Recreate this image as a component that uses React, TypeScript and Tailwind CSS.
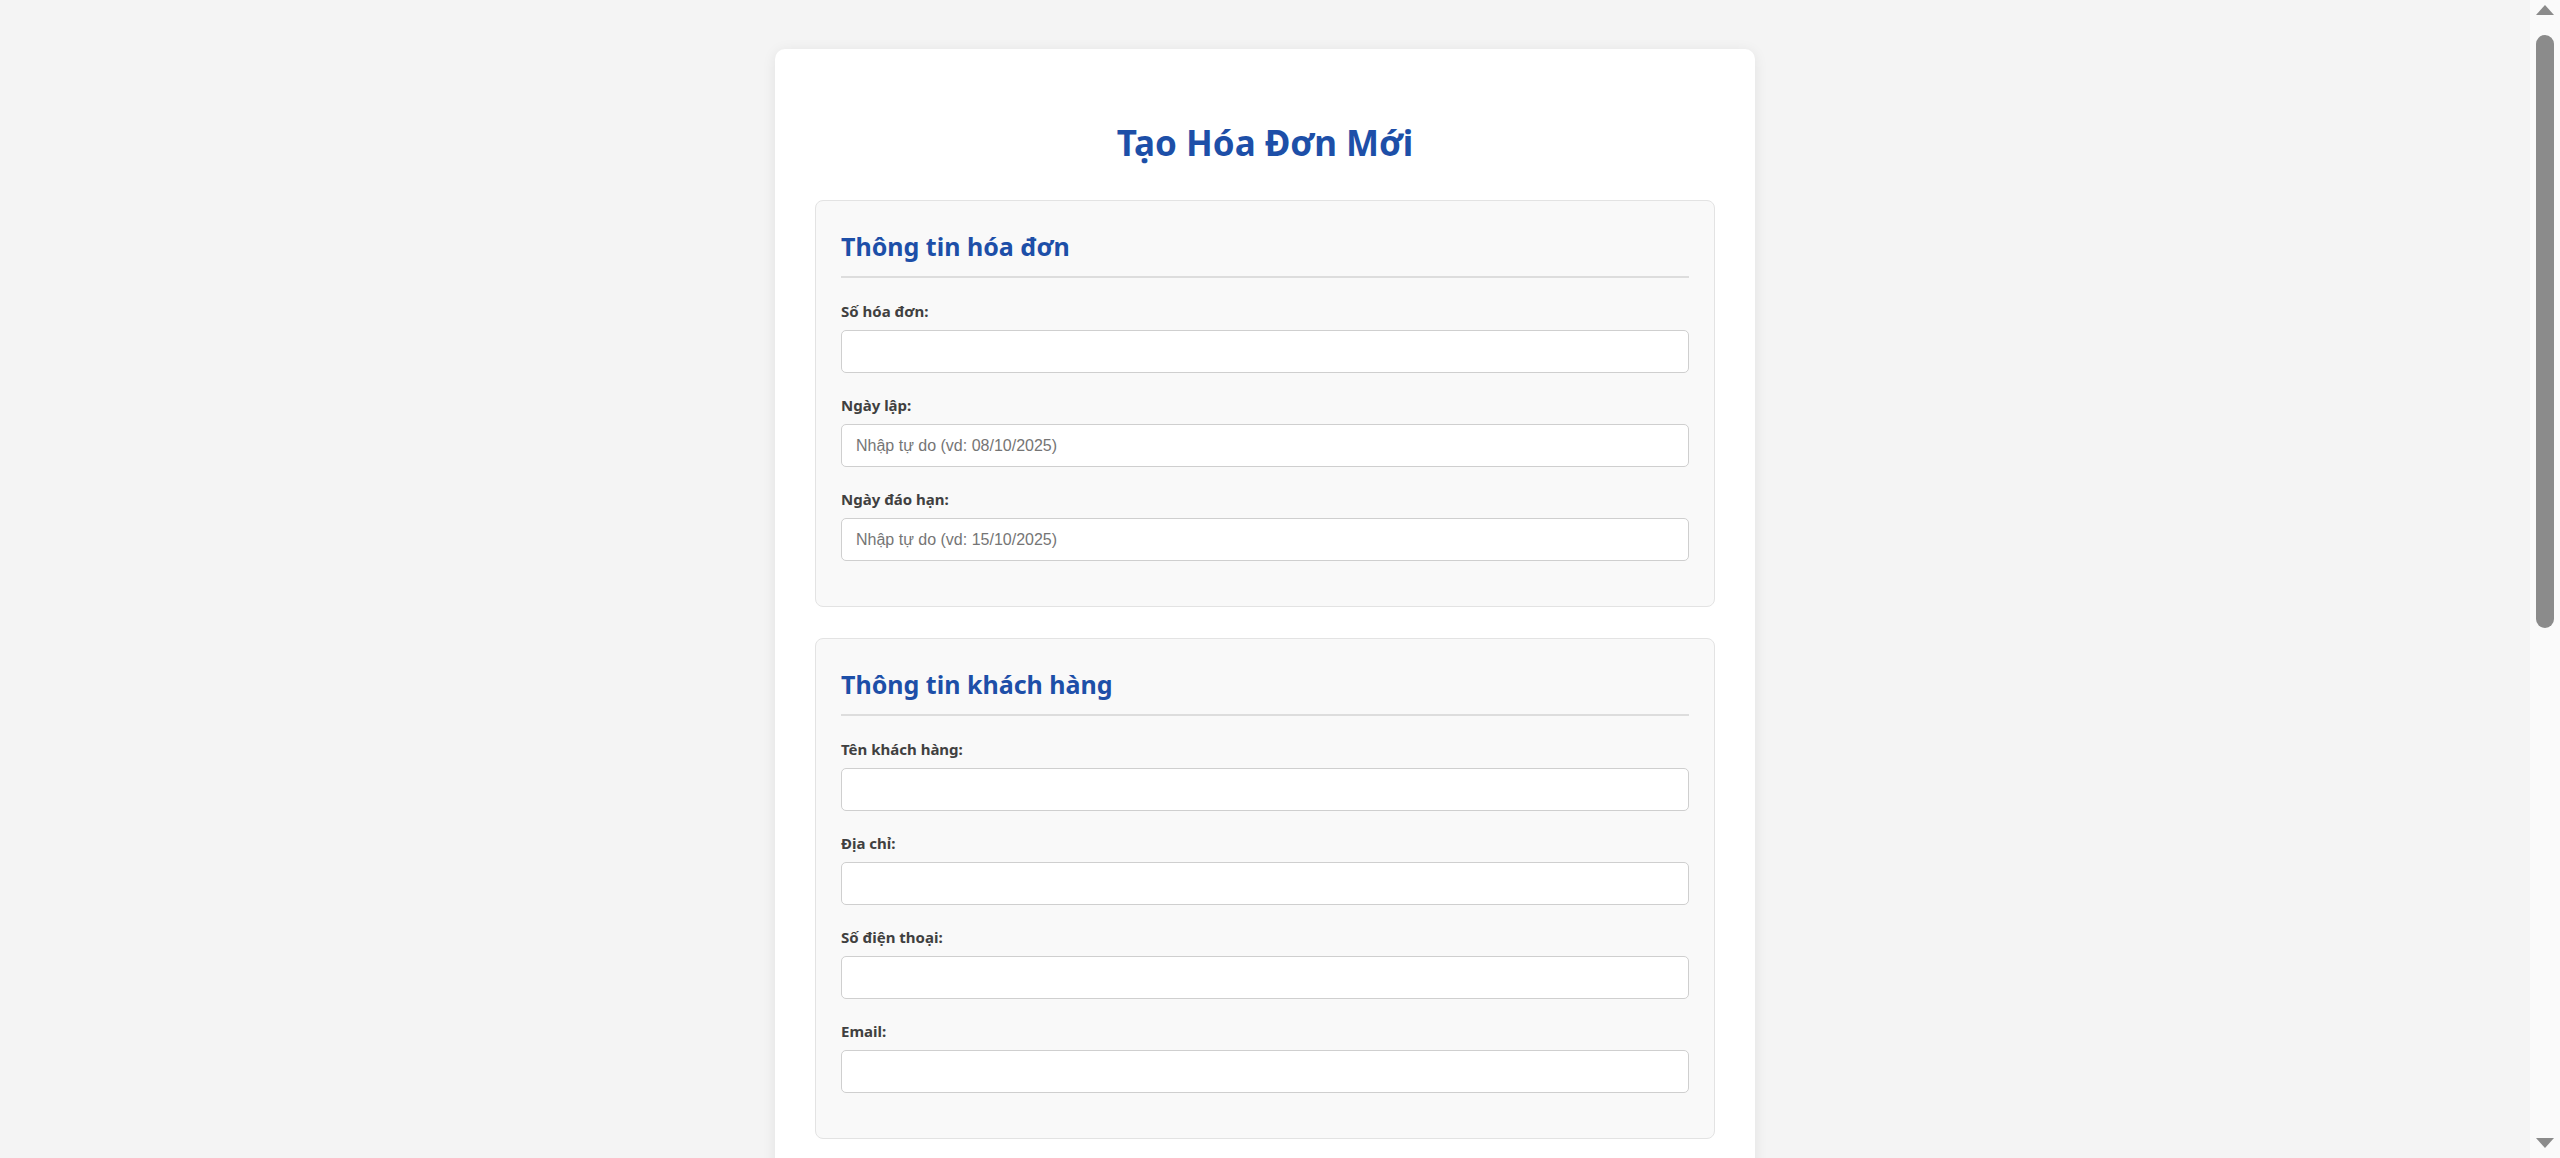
import React from 'react'

type Field = { label: string; placeholder?: string; type?: string }

const invoiceFields: Field[] = [
  { label: 'Số hóa đơn:' },
  { label: 'Ngày lập:', placeholder: 'Nhập tự do (vd: 08/10/2025)' },
  { label: 'Ngày đáo hạn:', placeholder: 'Nhập tự do (vd: 15/10/2025)' },
]

const customerFields: Field[] = [
  { label: 'Tên khách hàng:' },
  { label: 'Địa chỉ:' },
  { label: 'Số điện thoại:' },
  { label: 'Email:', type: 'email' },
]

const itemFields: Field[] = [
  { label: 'Tên sản phẩm / dịch vụ:' },
  { label: 'Số lượng:', type: 'number' },
  { label: 'Đơn giá (VNĐ):', type: 'number' },
]

function FormGroup({ f }: { f: Field }) {
  return (
    <div className="mb-[22px]">
      <label className="block h-[20px] mb-[9px] text-[15px] leading-[20px] font-bold text-[#404040]">{f.label}</label>
      <input
        type={f.type ?? 'text'}
        placeholder={f.placeholder}
        className="block w-full h-[43px] px-[14px] bg-white border border-[#cfcfcf] rounded-[5px] text-[16px] text-[#333] placeholder:text-[#757575] outline-none"
        style={{ fontFamily: '"Liberation Sans", Arial, sans-serif' }}
      />
    </div>
  )
}

function Section({ title, fields, children }: { title: string; fields?: Field[]; children?: React.ReactNode }) {
  return (
    <section className="bg-[#f9f9f9] border border-[#e3e3e3] rounded-[8px] px-[25px] pt-[29px] pb-[23px] mb-[31px]">
      <h2 className="h-[32px] text-[25px] leading-[32px] font-bold text-[#1d4fa8] pb-[14px] box-content border-b-2 border-[#dddddd] mb-[23px]">{title}</h2>
      {fields?.map(f => <FormGroup key={f.label} f={f} />)}
      {children}
    </section>
  )
}

function Scrollbar() {
  return (
    <div className="w-[30px] h-full shrink-0 bg-[#fafafa] flex flex-col items-center">
      <div className="mt-[5px] w-0 h-0 border-x-[9px] border-x-transparent border-b-[10px] border-b-[#8b8b8b]" />
      <div className="mt-[20px] w-[18px] h-[593px] rounded-full bg-[#8b8b8b]" />
      <div className="flex-1" />
      <div className="mb-[10px] w-0 h-0 border-x-[9px] border-x-transparent border-t-[10px] border-t-[#8b8b8b]" />
    </div>
  )
}

export default function App() {
  return (
    <div className="flex h-screen overflow-hidden bg-[#f4f4f4]" style={{ fontFamily: '"Noto Sans", "Open Sans", sans-serif' }}>
      <main className="flex-1 overflow-y-auto [scrollbar-width:none] pt-[49px] pb-[40px]">
        <div className="w-[980px] mx-auto bg-white rounded-[10px] shadow-[0_2px_14px_rgba(0,0,0,0.08)] px-[40px] pt-[72px] pb-[40px]">
          <h1 className="text-center text-[35px] leading-[43px] font-bold text-[#1d4fa8] mb-[36px]">Tạo Hóa Đơn Mới</h1>

          <Section title="Thông tin hóa đơn" fields={invoiceFields} />
          <Section title="Thông tin khách hàng" fields={customerFields} />

          <Section title="Sản phẩm / Dịch vụ" fields={itemFields}>
            <button className="mb-[22px] h-[40px] px-[18px] rounded-[5px] bg-[#28a745] text-white text-[14px] font-bold">+ Thêm sản phẩm</button>
          </Section>

          <div className="flex justify-center gap-[15px] pt-[10px]">
            <button className="h-[46px] px-[30px] rounded-[5px] bg-[#1d4fa8] text-white text-[16px] font-bold">Tạo hóa đơn</button>
            <button className="h-[46px] px-[30px] rounded-[5px] bg-[#6c757d] text-white text-[16px] font-bold">Xem trước</button>
          </div>
        </div>
      </main>
      <Scrollbar />
    </div>
  )
}
